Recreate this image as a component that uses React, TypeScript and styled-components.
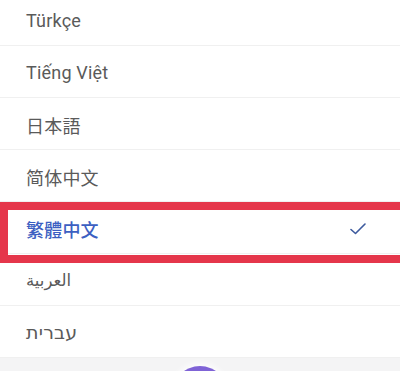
import React from 'react';
import styled, { createGlobalStyle } from 'styled-components';

const GlobalStyle = createGlobalStyle`
    html, body {
        margin: 0;
        padding: 0;
        background: #ffffff;
        overflow: hidden;
    }
    body {
        font-family: Roboto, 'Noto Sans CJK TC', 'Noto Sans', sans-serif;
    }
`;

const languages = [
    { label: 'Türkçe' },
    { label: 'Tiếng Việt' },
    { label: '日本語', lang: 'ja' },
    { label: '简体中文', lang: 'zh-CN' },
    { label: '繁體中文', lang: 'zh-TW', selected: true },
    { label: 'العربية', small: true },
    { label: 'עברית', big: true },
];

export default function App() {
    return (
        <>
            <GlobalStyle />
            <Screen>
                <List>
                    {languages.map((item) => (
                        <Row key={item.label}>
                            <Label
                                lang={item.lang}
                                selected={!!item.selected}
                                size={item.small ? 16.5 : item.big ? 19 : 18}
                            >
                                {item.label}
                            </Label>
                            {item.selected && (
                                <Check width="16" height="12" viewBox="0 0 16 12">
                                    <path d="M1 6.5 L5.5 10.5 L15 1" fill="none" stroke="#3d5a9e" strokeWidth="1.6" strokeLinecap="round" strokeLinejoin="round" />
                                </Check>
                            )}
                        </Row>
                    ))}
                </List>
                <BottomBar />
                {/* annotation drawn over the selected row */}
                <Highlight />
                <Fab />
            </Screen>
        </>
    );
}

const Screen = styled.div`
    position: relative;
    width: 400px;
    height: 371px;
    overflow: hidden;
    display: flex;
    flex-direction: column;
    background: #ffffff;
`;
const List = styled.div`
    display: flex;
    flex-direction: column;
    margin-top: -6px;
`;
const Row = styled.div`
    display: flex;
    align-items: center;
    height: 52px;
    padding: 2px 34px 0 26px;
    box-sizing: border-box;
    border-bottom: 1px solid #f0f0f0;
`;
const Label = styled.span<{ selected: boolean; size: number }>`
    font-size: ${(p) => p.size}px;
    color: ${(p) => (p.selected ? '#3c5fc2' : '#5a5a5a')};
    font-weight: ${(p) => (p.selected ? 500 : 400)};
    letter-spacing: 0.2px;
    margin-right: auto;
    font-family: ${(p) =>
        p.lang === 'zh-CN'
            ? "Roboto, 'Noto Sans CJK SC', sans-serif"
            : p.lang === 'ja'
            ? "Roboto, 'Noto Sans CJK JP', sans-serif"
            : "Roboto, 'Noto Sans CJK TC', 'Noto Sans', 'DejaVu Sans', sans-serif"};
`;
const Check = styled.svg`
    display: block;
`;
const BottomBar = styled.div`
    flex: 1;
    background: #f4f4f5;
`;
const Highlight = styled.div`
    position: absolute;
    left: 0;
    top: 202px;
    width: 420px;
    height: 61px;
    box-sizing: border-box;
    border: 8px solid #e5364b;
`;
const Fab = styled.div`
    position: absolute;
    left: 172px;
    top: 366px;
    width: 56px;
    height: 56px;
    border-radius: 50%;
    background: #7f63d6;
    box-shadow: 0 -3px 6px rgba(255, 255, 255, 0.8);
`;
